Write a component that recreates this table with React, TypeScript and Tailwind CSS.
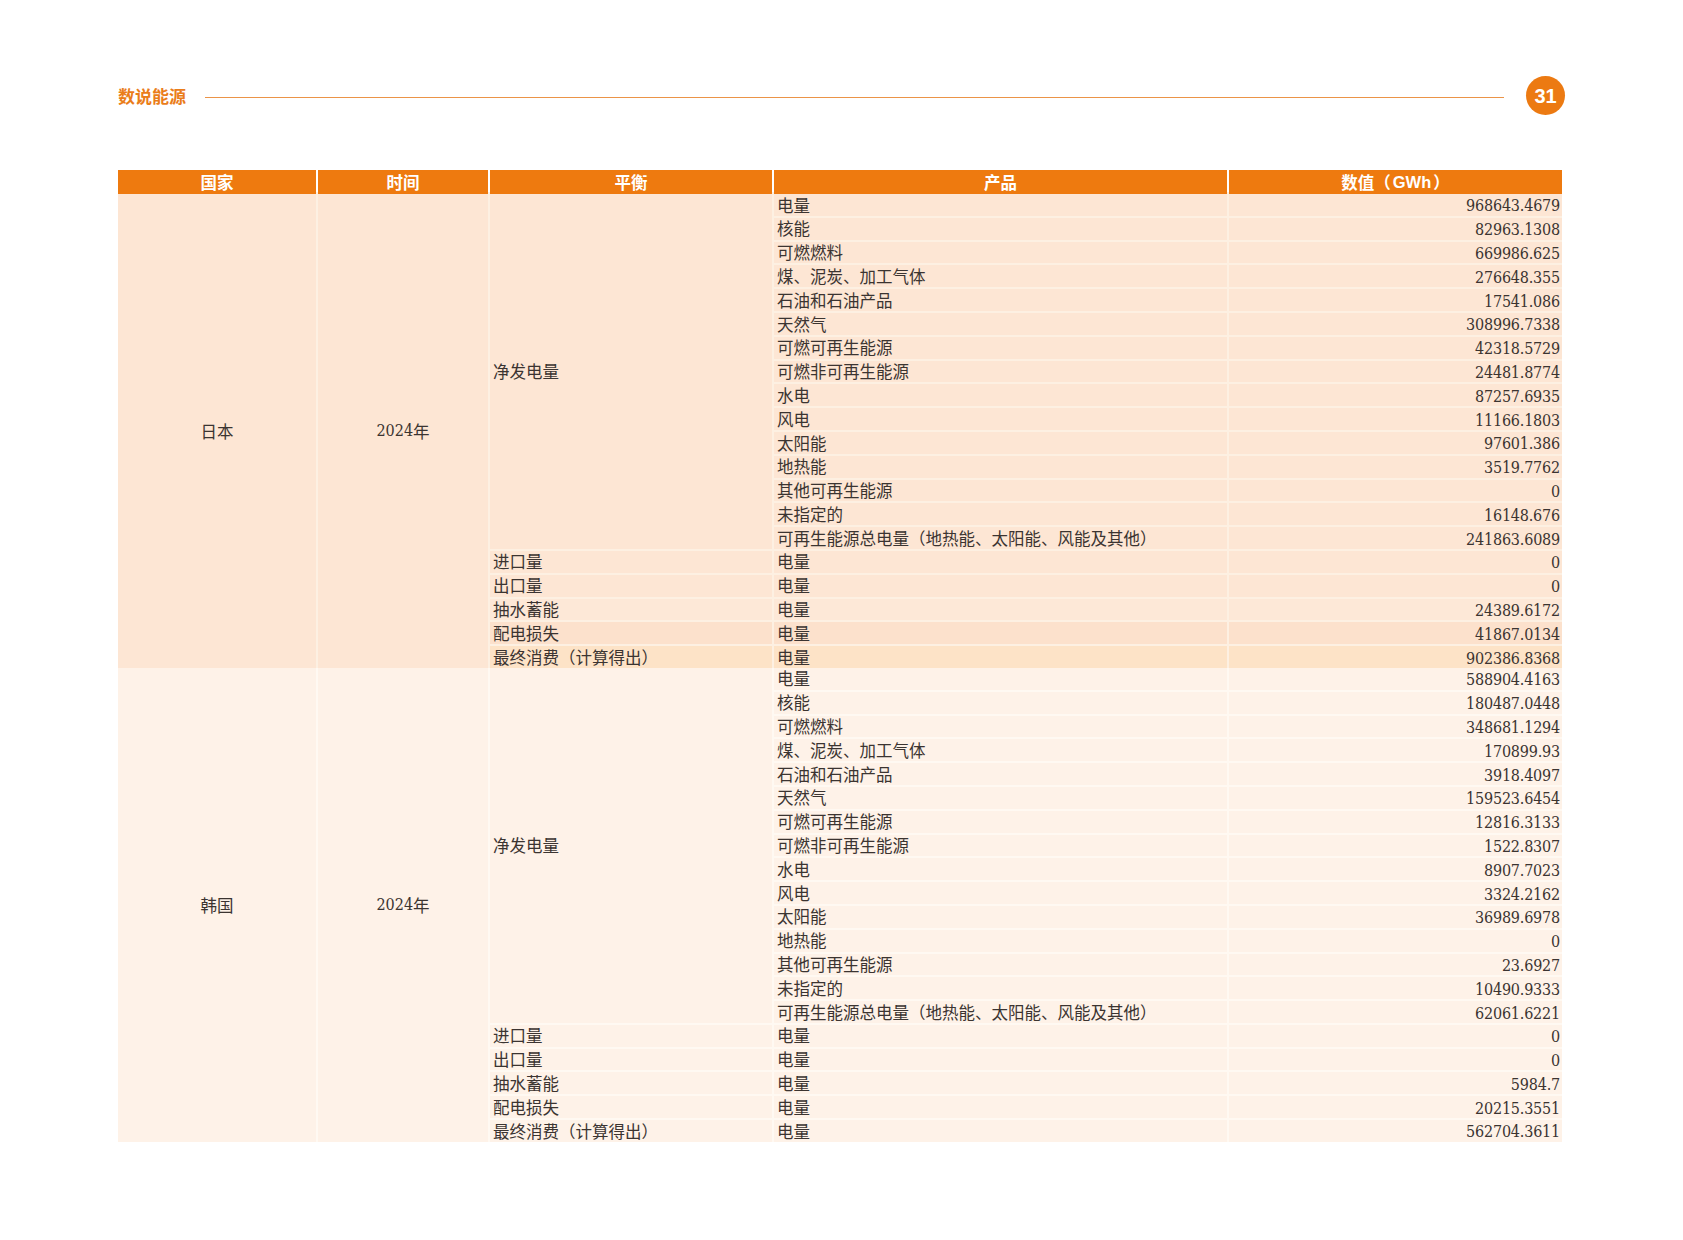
const cjk = '"Noto Sans CJK SC", "Noto Sans", sans-serif'

type Row = { balance?: string; product: string; value: string; bg?: string }

const products = [
  '电量',
  '核能',
  '可燃燃料',
  '煤、泥炭、加工气体',
  '石油和石油产品',
  '天然气',
  '可燃可再生能源',
  '可燃非可再生能源',
  '水电',
  '风电',
  '太阳能',
  '地热能',
  '其他可再生能源',
  '未指定的',
  '可再生能源总电量（地热能、太阳能、风能及其他）',
]

const tail = ['进口量', '出口量', '抽水蓄能', '配电损失', '最终消费（计算得出）']

function buildRows(net: string[], rest: string[], tailBg: string[]): Row[] {
  const rows: Row[] = net.map((v, i) => ({ product: products[i], value: v }))
  rest.forEach((v, i) => rows.push({ balance: tail[i], product: '电量', value: v, bg: tailBg[i] }))
  return rows
}

const japan = buildRows(
  [
    '968643.4679', '82963.1308', '669986.625', '276648.355', '17541.086',
    '308996.7338', '42318.5729', '24481.8774', '87257.6935', '11166.1803',
    '97601.386', '3519.7762', '0', '16148.676', '241863.6089',
  ],
  ['0', '0', '24389.6172', '41867.0134', '902386.8368'],
  ['bg-[#fde6d4]', 'bg-[#fde6d4]', 'bg-[#fde8d7]', 'bg-[#fce1cc]', 'bg-[#fde3c7]'],
)

const korea = buildRows(
  [
    '588904.4163', '180487.0448', '348681.1294', '170899.93', '3918.4097',
    '159523.6454', '12816.3133', '1522.8307', '8907.7023', '3324.2162',
    '36989.6978', '0', '23.6927', '10490.9333', '62061.6221',
  ],
  ['0', '0', '5984.7', '20215.3551', '562704.3611'],
  ['bg-[#fef2e8]', 'bg-[#fef2e8]', 'bg-[#fef2e8]', 'bg-[#fef2e8]', 'bg-[#fef2e8]'],
)

const cols = 'grid grid-cols-[198px_170px_282px_453px_1fr] gap-x-[2px]'
const numFont = '"DejaVu Serif", "Liberation Serif", serif'

function Block({ country, rows, cell, line }: { country: string; rows: Row[]; cell: string; line: string }) {
  return (
    <div className={`${cols} auto-rows-[21.8px] gap-y-[2px] ${line} text-[16.5px] text-[#3b3431]`}>
      <div className={`row-span-20 flex items-center justify-center ${cell}`} style={{ fontFamily: cjk }}>
        {country}
      </div>
      <div className={`row-span-20 flex items-center justify-center ${cell}`} style={{ fontFamily: cjk }}>
        <span className="text-[16px] font-stretch-condensed" style={{ fontFamily: numFont }}>
          2024
        </span>
        年
      </div>
      <div className={`row-span-15 flex items-center pl-[3px] ${cell}`} style={{ fontFamily: cjk }}>
        净发电量
      </div>
      {rows.map((r, i) => {
        const bg = r.bg ?? cell
        return [
          r.balance ? (
            <div key={`b${i}`} className={`flex items-center pl-[3px] ${bg}`} style={{ fontFamily: cjk }}>
              {r.balance}
            </div>
          ) : null,
          <div key={`p${i}`} className={`flex items-center pl-[3px] ${bg}`} style={{ fontFamily: cjk }}>
            {r.product}
          </div>,
          <div
            key={`v${i}`}
            className={`flex items-center justify-end pt-[3px] pr-[2px] ${bg} text-[16px] font-stretch-condensed tracking-[-0.2px]`}
            style={{ fontFamily: numFont }}
          >
            {r.value}
          </div>,
        ]
      })}
    </div>
  )
}

export default function App() {
  return (
    <main className="h-[1240px] w-[1683px] bg-white px-[118px] pt-[76px]">
      <header className="flex h-[39px] items-center">
        <span className="text-[17px] font-bold text-[#ea7d1a]" style={{ fontFamily: cjk }}>
          数说能源
        </span>
        <div className="mt-[4px] ml-[19px] mr-[22px] h-px flex-1 bg-[#eb9448]" />
        <div className="flex h-[39px] w-[39px] items-center justify-center rounded-full bg-[#ec7a12]">
          <span className="text-[20px] font-bold text-white" style={{ fontFamily: '"Liberation Sans", sans-serif' }}>
            31
          </span>
        </div>
      </header>

      <section className="mt-[55px] w-[1444px]">
        <div className={`${cols} h-[22px] bg-white text-[16.5px] font-bold text-white`} style={{ fontFamily: cjk }}>
          <div className="flex items-center justify-center bg-[#ee7a0f]">国家</div>
          <div className="flex items-center justify-center bg-[#ee7a0f]">时间</div>
          <div className="flex items-center justify-center bg-[#ee7a0f]">平衡</div>
          <div className="flex items-center justify-center bg-[#ee7a0f]">产品</div>
          <div className="flex items-center justify-center bg-[#ee7a0f]">
            数值（<span className="px-[2px]" style={{ fontFamily: '"Liberation Sans", sans-serif' }}>GWh</span>）
          </div>
        </div>
        <div className="h-[2px] bg-[#fdf0e2]" />
        <Block country="日本" rows={japan} cell="bg-[#fde6d4]" line="bg-[#fdf0e2]" />
        <Block country="韩国" rows={korea} cell="bg-[#fef2e8]" line="bg-[#fff9f2]" />
      </section>
    </main>
  )
}
